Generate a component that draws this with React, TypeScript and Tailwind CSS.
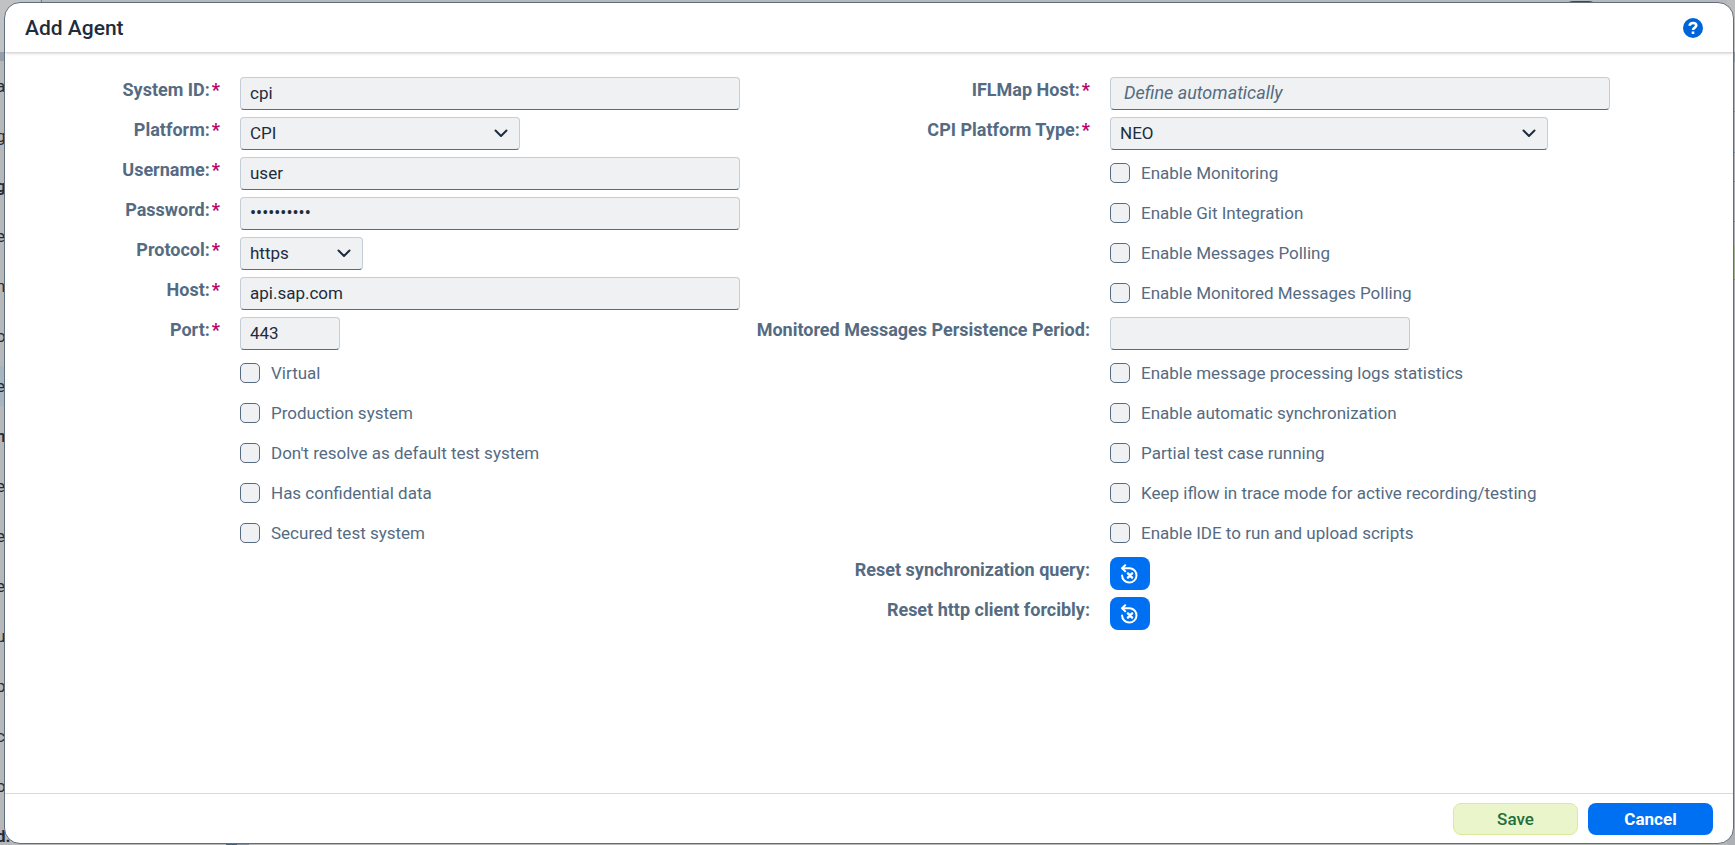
import React from "react";

const FIELD =
  "h-[33px] rounded border border-[#c5ced6] border-b-[#556b82] bg-[#eff1f2] px-[9px] pb-0.5 text-[#1d2d3e] outline-none placeholder:text-lg placeholder:italic placeholder:text-[#556b82]";

const BACKDROP_ROWS = [
  { text: "a", bold: false },
  { text: "gr", bold: false },
  { text: "g", bold: true },
  { text: "e", bold: false },
  { text: "n", bold: false },
  { text: "o", bold: false },
  { text: "e", bold: false, selected: true },
  { text: "nc", bold: true },
  { text: "e", bold: false },
  { text: "e", bold: false },
  { text: "e;", bold: false },
  { text: "u", bold: false },
  { text: "p", bold: false },
  { text: "co", bold: false },
  { text: "o", bold: false },
  { text: "d.", bold: true },
];

type RowProps = {
  side: "left" | "right";
  label?: string;
  htmlFor?: string;
  required?: boolean;
  children: React.ReactNode;
};

function Row({ side, label, htmlFor, required, children }: RowProps) {
  const cols = side === "left" ? "grid-cols-[235fr_500fr]" : "grid-cols-[370fr_623fr]";
  return (
    <div className={`grid h-10 ${cols}`}>
      <div className="flex justify-end pr-5 pt-[5px] text-lg leading-6">
        {label && (
          <label htmlFor={htmlFor} className="whitespace-nowrap font-bold text-[#556b82]">
            {label}:{required && <span className="pl-0.5 text-[#ba066c]">*</span>}
          </label>
        )}
      </div>
      <div className="flex items-start pt-1">{children}</div>
    </div>
  );
}

function Select({ id, value, width }: { id: string; value: string; width: string }) {
  return (
    <div className={`relative ${width}`}>
      <select id={id} defaultValue={value} className={`w-full appearance-none ${FIELD}`}>
        <option>{value}</option>
      </select>
      <svg
        viewBox="0 0 14 9"
        className="pointer-events-none absolute right-3 top-3 h-[9px] w-[14px]"
        fill="none"
        stroke="#1d2d3e"
        strokeWidth="2"
        strokeLinecap="round"
        strokeLinejoin="round"
      >
        <path d="M1.5 1.5 7 7l5.5-5.5" />
      </svg>
    </div>
  );
}

function Check({ id, label }: { id: string; label: string }) {
  return (
    <div className="flex h-8 items-center gap-[11px]">
      <input
        id={id}
        type="checkbox"
        className="size-5 appearance-none rounded-[5px] border border-[#556b82] bg-[#eff1f2] checked:bg-[#0064d9]"
      />
      <label htmlFor={id} className="whitespace-nowrap text-[#556b82]">
        {label}
      </label>
    </div>
  );
}

function ResetButton({ id, label }: { id: string; label: string }) {
  return (
    <button
      id={id}
      type="button"
      aria-label={label}
      className="flex h-[33px] w-10 items-center justify-center rounded-lg bg-[#0070f2]"
    >
      <svg viewBox="0 0 20 20" className="size-5" fill="none" stroke="#fff" strokeWidth="2" strokeLinecap="round">
        <path d="M2.400 4.200h7.600a7.200 7.200 0 1 1-7.900 7.400" />
        <path d="M5.200 1.200 2.100 4.200l3.100 3" strokeLinejoin="round" />
        <path d="m7.900 9.400 4.200 4.200M12.100 9.400l-4.200 4.200" strokeWidth="2.400" />
      </svg>
    </button>
  );
}

function Backdrop() {
  return (
    <div aria-hidden="true" className="absolute inset-0 overflow-hidden text-[#1d2d3e]">
      <div className="absolute left-0 top-0 w-10">
        <div className="h-[52px] bg-[#c0c2c4]" />
        <div className="h-[9px] bg-[#969fa8]" />
        {BACKDROP_ROWS.map((r, i) => (
          <div key={i} className={`flex h-[50px] items-center ${r.bold ? "font-bold" : ""}`}>
            <span className={`-ml-1 flex h-10 items-center ${r.selected ? "bg-[#a5b6c0]" : ""}`}>{r.text}</span>
          </div>
        ))}
      </div>
      <div className="absolute left-[41px] top-0 h-2 w-px bg-[#a8791f]" />
      <div className="absolute right-[138px] top-px h-4 w-8 rounded-lg bg-[#0a559f]" />
      <div className="absolute bottom-0 left-[226px] flex h-1">
        <div className="w-[11px] bg-[#47637d]" />
        <div className="w-3 bg-[#8593a1]" />
      </div>
      <div className="absolute right-0 top-0 flex h-full w-2 flex-col bg-[#adb1b6]">
        <div className="h-[52px] bg-[#babcbd]" />
        <div className="h-[10px] bg-[#8f98a2]" />
        <div className="h-[50px] border-b border-[#7c8896]" />
        <div className="h-[41px] border-b border-[#7c8896]" />
        <div className="h-[29px] border-b border-[#7c8896]" />
        <div className="h-[40px] border-b border-[#7c8896]" />
        <div className="mt-6 h-[33px] bg-[#a3b18c]" />
        <div className="border-b border-[#7c8896]" />
      </div>
    </div>
  );
}

const LEFT_CHECKS = [
  "Virtual",
  "Production system",
  "Don't resolve as default test system",
  "Has confidential data",
  "Secured test system",
];
const RIGHT_CHECKS_TOP = [
  "Enable Monitoring",
  "Enable Git Integration",
  "Enable Messages Polling",
  "Enable Monitored Messages Polling",
];
const RIGHT_CHECKS_BOTTOM = [
  "Enable message processing logs statistics",
  "Enable automatic synchronization",
  "Partial test case running",
  "Keep iflow in trace mode for active recording/testing",
  "Enable IDE to run and upload scripts",
];

export default function App() {
  return (
    <div className="relative flex min-h-screen overflow-hidden bg-[#b6b8ba] pb-px pl-1 pr-px pt-0.5 font-['Roboto',sans-serif] text-[17px] leading-6">
      <Backdrop />
      <section
        role="dialog"
        aria-labelledby="dialog-title"
        className="relative flex flex-1 flex-col overflow-hidden rounded-2xl border border-[#5f6f7f] bg-white"
      >
        <header className="flex h-[50px] items-center justify-between border-b border-[#d9d9d9] pl-5 pr-[30px] shadow-sm">
          <h1 id="dialog-title" className="text-[21px] font-medium text-[#1d2d3e]">
            Add Agent
          </h1>
          <button
            type="button"
            aria-label="Help"
            className="flex size-5 items-center justify-center rounded-full bg-[#0064d9]"
          >
            <svg viewBox="0 0 20 20" className="size-5" fill="none" stroke="#fff" strokeWidth="2.600">
              <path d="M6.700 7.800c0-1.800 1.300-2.800 3.300-2.800s3.300 1 3.300 2.600c0 2-3.300 2-3.300 4.400" />
              <path d="M10 13.400v2.600" />
            </svg>
          </button>
        </header>

        <form className="grid flex-1 grid-cols-[735fr_993fr] content-start pt-5">
          <div>
            <Row side="left" label="System ID" htmlFor="system-id" required>
              <input id="system-id" defaultValue="cpi" className={`w-full ${FIELD}`} />
            </Row>
            <Row side="left" label="Platform" htmlFor="platform" required>
              <Select id="platform" value="CPI" width="w-[280px]" />
            </Row>
            <Row side="left" label="Username" htmlFor="username" required>
              <input id="username" defaultValue="user" className={`w-full ${FIELD}`} />
            </Row>
            <Row side="left" label="Password" htmlFor="password" required>
              <input id="password" type="password" defaultValue="abcdefghij" className={`w-full text-lg ${FIELD}`} />
            </Row>
            <Row side="left" label="Protocol" htmlFor="protocol" required>
              <Select id="protocol" value="https" width="w-[123px]" />
            </Row>
            <Row side="left" label="Host" htmlFor="host" required>
              <input id="host" defaultValue="api.sap.com" className={`w-full ${FIELD}`} />
            </Row>
            <Row side="left" label="Port" htmlFor="port" required>
              <input id="port" defaultValue="443" className={`w-[100px] ${FIELD}`} />
            </Row>
            {LEFT_CHECKS.map((c, i) => (
              <Row key={c} side="left">
                <Check id={`system-option-${i}`} label={c} />
              </Row>
            ))}
          </div>

          <div>
            <Row side="right" label="IFLMap Host" htmlFor="iflmap-host" required>
              <input
                id="iflmap-host"
                placeholder="Define automatically"
                className={`w-[500px] placeholder:pl-1 ${FIELD}`}
              />
            </Row>
            <Row side="right" label="CPI Platform Type" htmlFor="platform-type" required>
              <Select id="platform-type" value="NEO" width="w-[438px]" />
            </Row>
            {RIGHT_CHECKS_TOP.map((c, i) => (
              <Row key={c} side="right">
                <Check id={`monitoring-option-${i}`} label={c} />
              </Row>
            ))}
            <Row side="right" label="Monitored Messages Persistence Period" htmlFor="period">
              <input id="period" className={`w-[300px] ${FIELD}`} />
            </Row>
            {RIGHT_CHECKS_BOTTOM.map((c, i) => (
              <Row key={c} side="right">
                <Check id={`processing-option-${i}`} label={c} />
              </Row>
            ))}
            <Row side="right" label="Reset synchronization query" htmlFor="reset-sync">
              <ResetButton id="reset-sync" label="Reset synchronization query" />
            </Row>
            <Row side="right" label="Reset http client forcibly" htmlFor="reset-http">
              <ResetButton id="reset-http" label="Reset http client forcibly" />
            </Row>
          </div>
        </form>

        <footer className="flex h-[50px] items-center justify-end gap-2.5 border-t border-[#d9d9d9] px-5">
          <button
            type="button"
            className="h-8 w-[125px] rounded-lg border border-[#d9ea9c] bg-[#ebf5cb] font-medium text-[#256f3a]"
          >
            Save
          </button>
          <button type="button" className="h-8 w-[125px] rounded-lg bg-[#0070f2] font-bold text-white">
            Cancel
          </button>
        </footer>
      </section>
    </div>
  );
}
